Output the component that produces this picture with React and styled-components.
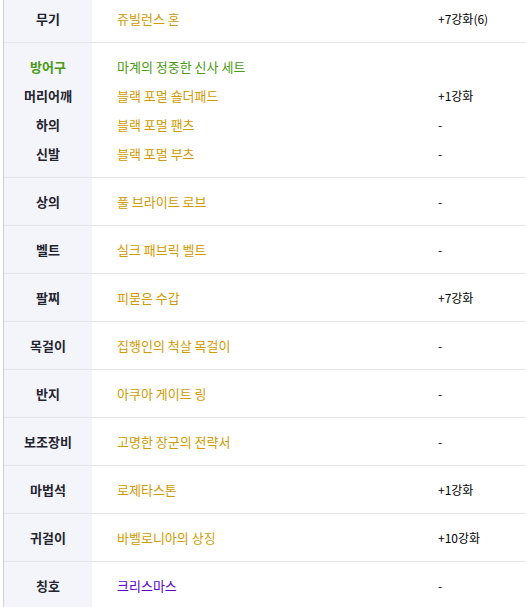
import styled, { createGlobalStyle } from 'styled-components';

const GlobalStyle = createGlobalStyle`
  html, body {
    margin: 0;
    padding: 0;
    background: #fff;
    overflow: hidden;
  }
  body {
    font-family: "Noto Sans CJK KR", "Noto Sans", sans-serif;
  }
`;

const Table = styled.div`
  margin: -5px 0 0 3px;
  border-left: 1px solid #cfd0d4;
`;

const Row = styled.div`
  display: grid;
  grid-template-columns: 88px 346px 1fr;
  border-bottom: 1px solid #e6e7ea;
`;

const Cell = styled.div`
  display: flex;
  flex-direction: column;
  padding: 9px 0;
  background: ${p => (p.$head ? '#f4f5fa' : 'transparent')};
  padding-left: ${p => (p.$pad || 0)}px;
`;

const Line = styled.div`
  height: 29px;
  display: flex;
  align-items: center;
  justify-content: ${p => (p.$center ? 'center' : 'flex-start')};
  white-space: nowrap;
`;

const Label = styled.span`
  font-size: 13px;
  font-weight: 700;
  color: ${p => p.$color || '#23232f'};
`;

const ItemName = styled.span`
  font-size: 13px;
  color: ${p => p.$color || '#d09b00'};
`;

const Enhance = styled.span`
  font-size: 12px;
  color: #000;
`;

const GREEN = '#4a9a12';
const PURPLE = '#5a00c8';

const rows = [
  [{ label: '무기', name: '쥬빌런스 혼', enh: '+7강화(6)' }],
  [
    { label: '방어구', name: '마계의 정중한 신사 세트', enh: '', color: GREEN, labelColor: GREEN },
    { label: '머리어깨', name: '블랙 포멀 숄더패드', enh: '+1강화' },
    { label: '하의', name: '블랙 포멀 팬츠', enh: '-' },
    { label: '신발', name: '블랙 포멀 부츠', enh: '-' },
  ],
  [{ label: '상의', name: '풀 브라이트 로브', enh: '-' }],
  [{ label: '벨트', name: '실크 패브릭 벨트', enh: '-' }],
  [{ label: '팔찌', name: '피묻은 수갑', enh: '+7강화' }],
  [{ label: '목걸이', name: '집행인의 척살 목걸이', enh: '-' }],
  [{ label: '반지', name: '아쿠아 게이트 링', enh: '-' }],
  [{ label: '보조장비', name: '고명한 장군의 전략서', enh: '-' }],
  [{ label: '마법석', name: '로제타스톤', enh: '+1강화' }],
  [{ label: '귀걸이', name: '바벨로니아의 상징', enh: '+10강화' }],
  [{ label: '칭호', name: '크리스마스', enh: '-', color: PURPLE }],
];

export default function App() {
  return (
    <>
      <GlobalStyle />
      <Table>
        {rows.map((lines, i) => (
          <Row key={i}>
            <Cell $head>
              {lines.map(l => (
                <Line key={l.label} $center>
                  <Label $color={l.labelColor}>{l.label}</Label>
                </Line>
              ))}
            </Cell>
            <Cell $pad={25}>
              {lines.map(l => (
                <Line key={l.label}>
                  <ItemName $color={l.color}>{l.name}</ItemName>
                </Line>
              ))}
            </Cell>
            <Cell>
              {lines.map(l => (
                <Line key={l.label}>
                  <Enhance>{l.enh}</Enhance>
                </Line>
              ))}
            </Cell>
          </Row>
        ))}
      </Table>
    </>
  );
}
